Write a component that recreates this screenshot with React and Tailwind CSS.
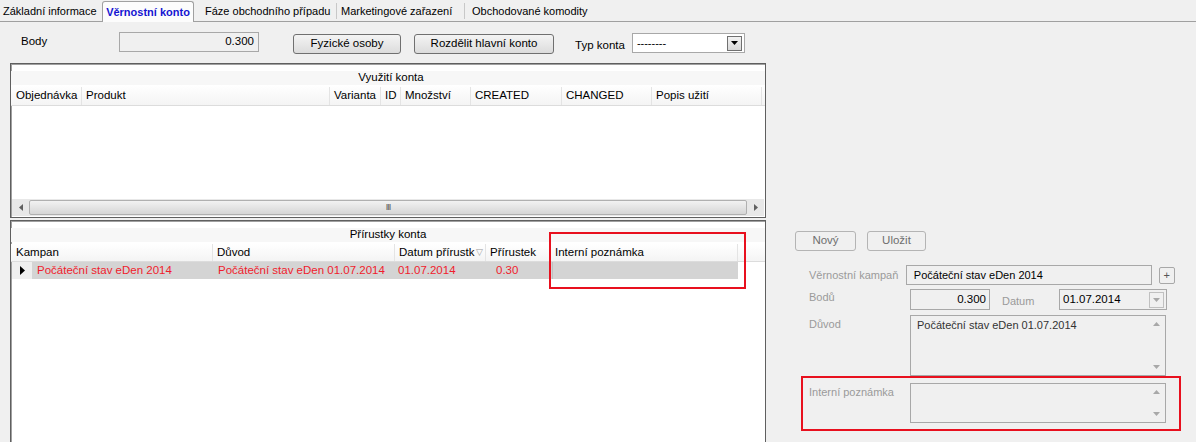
import React from 'react'

const usageCols = [
  ['Objednávka', 70],
  ['Produkt', 248],
  ['Varianta', 51],
  ['ID', 20],
  ['Množství', 70],
  ['CREATED', 91],
  ['CHANGED', 90],
  ['Popis užití', 110],
]

const incCols = [
  ['Kampan', 201],
  ['Důvod', 182],
  ['Datum přírustk', 91, true],
  ['Přírustek', 65],
  ['Interní poznámka', 187],
]

function Tab({ children, active, sep, pl = 3, w }) {
  if (active) {
    return (
      <div
        className="-mb-px flex h-[21px] items-center justify-center whitespace-nowrap rounded-t-[3px] border border-b-0 border-[#a0a0a0] bg-[#fcfcfc] font-bold text-[#1414d2]"
        style={{ width: w }}
      >
        {children}
      </div>
    )
  }
  return (
    <div className="flex h-[20px] items-center whitespace-nowrap" style={{ width: w }}>
      {sep && <span className="h-[16px] w-px bg-[#c8c8c8]" />}
      <span style={{ paddingLeft: pl }}>{children}</span>
    </div>
  )
}

function SmallBtn({ children, w, disabled }) {
  return (
    <button
      className={`flex h-[20px] items-center justify-center whitespace-nowrap rounded-[3px] border ${
        disabled
          ? 'border-[#b4b4b4] bg-[#f0f0f0] text-[#6e6e6e]'
          : 'border-[#707070] bg-gradient-to-b from-[#f4f4f4] to-[#dcdcdc] text-black'
      }`}
      style={{ width: w }}
    >
      {children}
    </button>
  )
}

function ScrollArrows() {
  return (
    <div className="flex w-[17px] flex-col items-center justify-between py-[6px] text-[#a8a8a8]">
      <svg width="7" height="4" viewBox="0 0 7 4"><path d="M0 4 L3.5 0 L7 4Z" fill="currentColor" /></svg>
      <svg width="7" height="4" viewBox="0 0 7 4"><path d="M0 0 L3.5 4 L7 0Z" fill="currentColor" /></svg>
    </div>
  )
}

export default function App() {
  return (
    <div className="h-[442px] w-[1196px] overflow-hidden whitespace-nowrap bg-[#f0f0f0] font-['Liberation_Sans',Arial,sans-serif] text-[11.5px] text-black">
      {/* tab strip */}
      <div className="flex h-[22px] items-end border-b border-[#a0a0a0] text-[11px]">
        <Tab w={102} pl={3}>Základní informace</Tab>
        <Tab active w={92}>Věrnostní konto</Tab>
        <Tab w={142} pl={11}>Fáze obchodního případu</Tab>
        <Tab sep w={128} pl={4}>Marketingové zařazení</Tab>
        <Tab sep w={140} pl={7}>Obchodované komodity</Tab>
      </div>

      {/* toolbar row */}
      <div className="mt-[10px] flex h-[22px] items-start">
        <span className="ml-[21px] mt-[1px] w-[98px]">Body</span>
        <div className="flex h-[20px] w-[140px] items-center justify-end border border-[#a8a8a8] bg-[#f0f0f0] pr-[4px]">0.300</div>
        <div className="ml-[34px] mt-[2px]"><SmallBtn w={108}>Fyzické osoby</SmallBtn></div>
        <div className="ml-[13px] mt-[2px]"><SmallBtn w={140}>Rozdělit hlavní konto</SmallBtn></div>
        <span className="ml-[21px] mt-[5px]">Typ konta</span>
        <div className="ml-[7px] mt-[1px] flex h-[20px] w-[113px] items-center justify-between border border-[#a8a8a8] bg-white pl-[4px] pr-[2px]">
          <span className="text-[11px]">--------</span>
          <span className="flex h-[15px] w-[15px] items-center justify-center border border-[#707070] bg-gradient-to-b from-[#f2f2f2] to-[#d8d8d8]">
            <svg width="7" height="4" viewBox="0 0 7 4"><path d="M0 0 L3.5 4 L7 0Z" fill="#000" /></svg>
          </span>
        </div>
      </div>

      {/* usage panel */}
      <div className="ml-[10px] mt-[9px] flex h-[155px] w-[756px] flex-col border border-[#5f5f5f] bg-white shadow-[inset_1px_1px_0_#a0a0a0]">
        <div className="mt-[7px] flex h-[14px] items-center justify-center bg-[#f7f7f7] pl-[6px]">Využití konta</div>
        <div className="flex h-[21px] items-center border-b border-[#dcdcdc] bg-gradient-to-b from-white to-[#f4f4f4] pl-[1px] pt-[2px]">
          {usageCols.map(([t, w]) => (
            <div key={t} className="flex h-full items-center overflow-hidden border-r border-[#e4e4e4] pl-[4px]" style={{ width: w }}>
              {t}
            </div>
          ))}
        </div>
        <div className="flex-1" />
        <div className="mx-[1px] mb-[1px] flex h-[17px] items-center bg-[#e8e8e8]">
          <span className="flex w-[17px] justify-center">
            <svg width="4" height="7" viewBox="0 0 4 7"><path d="M4 0 L0 3.5 L4 7Z" fill="#606060" /></svg>
          </span>
          <div className="flex h-[15px] flex-1 items-center justify-center rounded-[2px] border border-[#b0b0b0] bg-gradient-to-b from-[#f2f2f2] to-[#d6d6d6]">
            <span className="text-[9px] tracking-[-1px] text-[#555]">III</span>
          </div>
          <span className="flex w-[17px] justify-center">
            <svg width="4" height="7" viewBox="0 0 4 7"><path d="M0 0 L4 3.5 L0 7Z" fill="#606060" /></svg>
          </span>
        </div>
      </div>

      {/* bottom area */}
      <div className="mt-[2px] flex">
        <div className="relative ml-[10px] flex h-[240px] w-[756px] flex-col border border-[#5f5f5f] bg-white shadow-[inset_1px_1px_0_#a0a0a0]">
          <div className="mt-[7px] flex h-[14px] items-center justify-center bg-[#f7f7f7]">Přírustky konta</div>
          <div className="mt-[2px] flex h-[18px] items-center border-b border-[#dcdcdc] bg-gradient-to-b from-white to-[#f4f4f4] pl-[1px]">
            {incCols.map(([t, w, sort]) => (
              <div key={t} className="flex h-full items-center overflow-hidden border-r border-[#e4e4e4] pl-[4px]" style={{ width: w }}>
                {t}
                {sort && <span className="ml-[2px] text-[9px] text-[#9a9a9a]">▽</span>}
              </div>
            ))}
          </div>
          <div className="ml-[1px] flex h-[17px] w-[726px] items-center text-[#f01c2c]">
            <div className="flex h-full w-[20px] items-center justify-center bg-[#efefef]">
              <svg width="5" height="9" viewBox="0 0 5 9"><path d="M0 0 L5 4.5 L0 9Z" fill="#000" /></svg>
            </div>
            <div className="flex h-full flex-1 items-center bg-[#d4d4d4]">
              <span className="w-[182px] pl-[5px]">Počáteční stav eDen 2014</span>
              <span className="w-[182px] pl-[4px]">Počáteční stav eDen 01.07.2014</span>
              <span className="w-[91px] pl-[2px]">01.07.2014</span>
              <span className="w-[65px] pl-[9px]">0.30</span>
              <span className="h-full flex-1 border-l border-[#c0c0c0]" />
            </div>
          </div>
          <div className="pointer-events-none absolute left-[538px] top-[11px] h-[57px] w-[197px] border-2 border-[#e8101e]" />
        </div>

        {/* edit form */}
        <div className="ml-[29px] mt-[11px] flex w-[380px] flex-col">
          <div className="flex gap-[11px]">
            <SmallBtn w={61} disabled>Nový</SmallBtn>
            <SmallBtn w={59} disabled>Uložit</SmallBtn>
          </div>

          <div className="mt-[14px] flex h-[20px] items-center">
            <span className="ml-[14px] w-[101px] text-[11px] text-[#9a9a9a]">Věrnostní kampaň</span>
            <div className="flex h-[20px] w-[256px] items-center border border-[#a8a8a8] pl-[7px] text-[11px]">Počáteční stav eDen 2014</div>
            <div className="ml-[7px] flex h-[17px] w-[17px] items-center justify-center rounded-[2px] border border-[#a8a8a8] text-[11px] text-[#555]">+</div>
          </div>

          <div className="mt-[4px] flex h-[21px] items-start">
            <span className="ml-[14px] w-[101px] text-[11px] text-[#9a9a9a]">Bodů</span>
            <div className="flex h-[21px] w-[80px] items-center justify-end border border-[#a8a8a8] pr-[3px]">0.300</div>
            <span className="ml-[12px] mt-[4px] w-[57px] text-[11px] text-[#9a9a9a]">Datum</span>
            <div className="flex h-[21px] w-[108px] items-center justify-between border border-[#a8a8a8] pl-[3px] pr-[2px]">
              <span>01.07.2014</span>
              <span className="flex h-[16px] w-[15px] items-center justify-center border border-[#c0c0c0]">
                <svg width="7" height="4" viewBox="0 0 7 4"><path d="M0 0 L3.5 4 L7 0Z" fill="#a8a8a8" /></svg>
              </span>
            </div>
          </div>

          <div className="mt-[5px] flex">
            <span className="ml-[14px] mt-[1px] w-[101px] text-[11px] text-[#9a9a9a]">Důvod</span>
            <div className="flex h-[61px] w-[256px] border border-[#a8a8a8]">
              <span className="flex-1 pl-[6px] pt-[1px] text-[11px] text-[#333]">Počáteční stav eDen 01.07.2014</span>
              <ScrollArrows />
            </div>
          </div>

          <div className="ml-[6px] flex h-[55px] w-[380px] items-start border-2 border-[#e8101e] pt-[5px]">
            <span className="ml-[6px] mt-[1px] w-[101px] text-[11px] text-[#9a9a9a]">Interní poznámka</span>
            <div className="flex h-[40px] w-[256px] border border-[#a8a8a8]">
              <span className="flex-1" />
              <ScrollArrows />
            </div>
          </div>
        </div>
      </div>
    </div>
  )
}
